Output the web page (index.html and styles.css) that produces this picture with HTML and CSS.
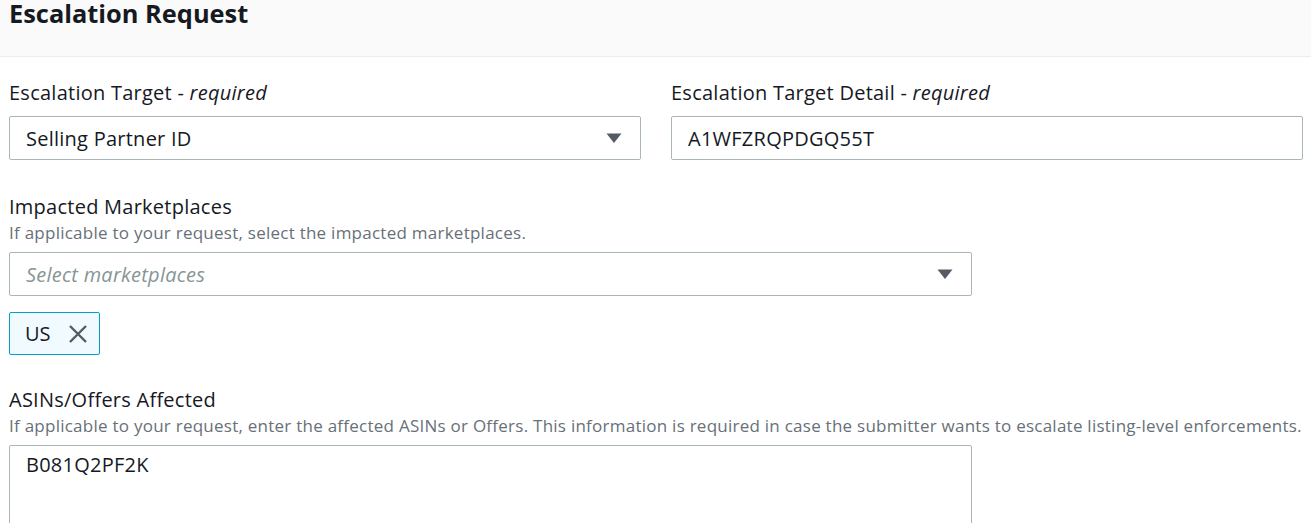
FILE: index.html
```html
<!DOCTYPE html>
<html lang="en">
<head>
<meta charset="utf-8">
<title>Escalation Request</title>
<link rel="stylesheet" href="styles.css">
</head>
<body>
<header class="panel-header">
  <h2 class="panel-title">Escalation Request</h2>
</header>
<main class="form">
  <div class="row-two">
    <div class="field">
      <label class="field-label">Escalation Target <span class="req">- <i>required</i></span></label>
      <div class="select">
        <span class="select-value">Selling Partner ID</span>
        <svg class="caret" width="16" height="10" viewBox="0 0 16 10"><path d="M0.5 0.5h15L8 10z" fill="#545b64"/></svg>
      </div>
    </div>
    <div class="field">
      <label class="field-label">Escalation Target Detail <span class="req">- <i>required</i></span></label>
      <div class="input">A1WFZRQPDGQ55T</div>
    </div>
  </div>

  <div class="field field-wide field-marketplaces">
    <label class="field-label">Impacted Marketplaces</label>
    <div class="field-desc">If applicable to your request, select the impacted marketplaces.</div>
    <div class="select">
      <span class="select-placeholder">Select marketplaces</span>
      <svg class="caret" width="16" height="10" viewBox="0 0 16 10"><path d="M0.5 0.5h15L8 10z" fill="#545b64"/></svg>
    </div>
    <div class="tokens">
      <div class="token">
        <span class="token-label">US</span>
        <svg class="token-dismiss" width="20" height="20" viewBox="0 0 20 20"><path d="M2 2L18 18M18 2L2 18" stroke="#545b64" stroke-width="2.4" fill="none"/></svg>
      </div>
    </div>
  </div>

  <div class="field field-wide field-asins">
    <label class="field-label">ASINs/Offers Affected</label>
    <div class="field-desc">If applicable to your request, enter the affected ASINs or Offers. This information is required in case the submitter wants to escalate listing-level enforcements.</div>
    <div class="textarea">B081Q2PF2K</div>
  </div>
</main>
</body>
</html>
```

FILE: styles.css
```css
* {
  box-sizing: border-box;
}

body {
  margin: 0;
  font-family: "Open Sans", "Noto Sans", sans-serif;
  color: #16191f;
  background: #ffffff;
  overflow: hidden;
}

.panel-header {
  height: 57px;
  background: #fafafa;
  border-bottom: 1px solid #eaeded;
  padding: 0 9px;
}

.panel-title {
  margin: 0;
  font-size: 25.4px;
  line-height: 26px;
  font-weight: 700;
}

.form {
  padding: 25px 9px 0;
  display: flex;
  flex-direction: column;
}

.row-two {
  display: grid;
  grid-template-columns: 632px 632px;
  column-gap: 30px;
}

.field {
  display: flex;
  flex-direction: column;
}

.field-wide {
  width: 963px;
}

.field-marketplaces {
  margin-top: 36px;
}

.field-asins {
  margin-top: 34px;
}

.field-label {
  font-size: 20px;
  line-height: 22px;
  margin-bottom: 12px;
  letter-spacing: 0.25px;
}

.field-label + .field-desc {
  margin-top: -7px;
}

.field-desc {
  font-size: 17px;
  line-height: 20px;
  color: #687078;
  margin-bottom: 9px;
  letter-spacing: 0.25px;
  white-space: nowrap;
}

.req i {
  font-style: italic;
}

.select,
.input {
  height: 44px;
  border: 1px solid #aab7b8;
  border-radius: 2px;
  display: flex;
  align-items: center;
  padding: 0 18px 0 16px;
  font-size: 20px;
  letter-spacing: 0.25px;
}

.select {
  justify-content: space-between;
}

.select-placeholder {
  color: #879596;
  font-style: italic;
}

.caret {
  display: block;
}

.tokens {
  display: flex;
  margin-top: 16px;
}

.token {
  display: flex;
  align-items: center;
  gap: 17px;
  height: 43px;
  padding: 0 11px 0 15px;
  background: #f1faff;
  border: 1px solid #00a1c9;
  border-radius: 2px;
  font-size: 20px;
}

.token-dismiss {
  display: block;
}

.textarea {
  height: 90px;
  border: 1px solid #aab7b8;
  border-radius: 2px;
  padding: 6px 16px;
  font-size: 20px;
  line-height: 26px;
  letter-spacing: 0.25px;
}
```
